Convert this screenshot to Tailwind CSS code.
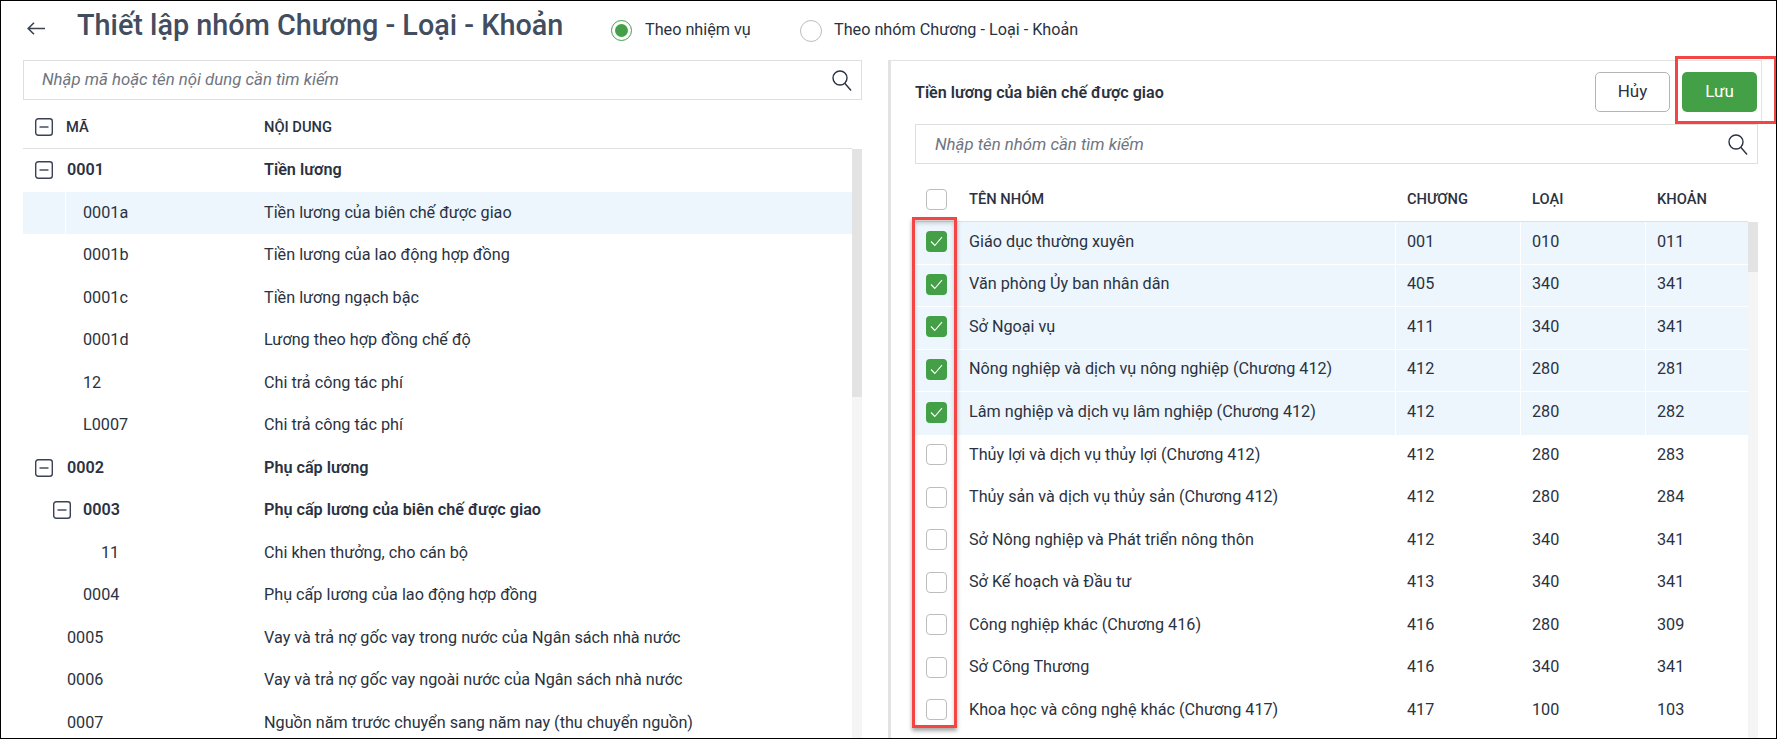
<!doctype html>
<html lang="vi">
<head>
<meta charset="utf-8">
<script src="https://cdn.jsdelivr.net/npm/@tailwindcss/browser@4"></script>
<title>Thiết lập nhóm Chương - Loại - Khoản</title>
</head>
<body class="bg-white">
<div class="relative w-[1777px] h-[739px] overflow-hidden border border-black bg-white font-[Roboto,sans-serif] text-[16.2px] text-[#2a3242]">

  <header class="flex items-start h-[59px]">
    <svg class="ml-[26px] mt-[21px] shrink-0" width="18" height="13" viewBox="0 0 18 13" fill="none" stroke="#3a4256" stroke-width="1.6"><path d="M18 6.5H1M7 .8 1.2 6.5 7 12.2"/></svg>
    <h1 class="ml-[32px] mt-[4px] w-[534px] shrink-0 text-[28.8px] leading-[40px] font-medium text-[#434d60] whitespace-nowrap">Thiết lập nhóm Chương - Loại - Khoản</h1>
    <div class="flex items-center mt-[19px] h-[21px]">
      <span class="flex items-center justify-center w-[21px] h-[21px] rounded-full border border-[#43a047]"><span class="w-[13px] h-[13px] rounded-full bg-[#43a047]"></span></span>
      <span class="ml-[13px] w-[155px]">Theo nhiệm vụ</span>
      <span class="w-[22px] h-[22px] rounded-full border border-[#bdbdbd]"></span>
      <span class="ml-[12px]">Theo nhóm Chương - Loại - Khoản</span>
    </div>
  </header>

  <main class="flex h-[678px]">
    <section class="ml-[22px] w-[839px] shrink-0 flex flex-col">
      <div class="flex items-center justify-between h-[40px] border border-[#dedede] pl-[18px] pr-[9px] italic text-[16.8px] text-[#6f7580]">
        <span>Nhập mã hoặc tên nội dung cần tìm kiếm</span>
        <svg width="20" height="21" viewBox="0 0 20 21" fill="none" stroke="#2a3242" stroke-width="1.4"><circle cx="8" cy="8" r="7"/><path d="M13 13.5l6 7"/></svg>
      </div>
      <div class="flex items-center h-[49px] w-[829px] pt-[6px] border-b border-[#e0e0e0] text-[14.7px] font-medium shrink-0">
        <div class="flex items-center w-[241px] pl-[12px]">
          <svg width="18" height="18" viewBox="0 0 18 18" fill="none" stroke="#3a4256" stroke-width="1.4"><rect x=".7" y=".7" width="16.6" height="16.6" rx="2.5"/><path d="M4.5 9h9"/></svg>
          <span class="ml-[13px]">MÃ</span>
        </div>
        <span>NỘI DUNG</span>
      </div>
      <div class="flex flex-1 min-h-0">
        <div class="w-[829px] shrink-0">
          <div class="flex items-center h-[42.5px] font-semibold"><div class="flex items-center w-[241px] pl-[12px]"><svg width="18" height="18" viewBox="0 0 18 18" fill="none" stroke="#3a4256" stroke-width="1.4"><rect x=".7" y=".7" width="16.6" height="16.6" rx="2.5"/><path d="M4.5 9h9"/></svg><span class="ml-[14px]">0001</span></div><span>Tiền lương</span></div>
          <div class="flex items-center h-[42.5px] bg-[#eef6fd]"><div class="w-[43px] h-full border-r border-white"></div><div class="w-[198px] pl-[17px]">0001a</div><span>Tiền lương của biên chế được giao</span></div>
          <div class="flex items-center h-[42.5px]"><div class="w-[241px] pl-[60px]">0001b</div><span>Tiền lương của lao động hợp đồng</span></div>
          <div class="flex items-center h-[42.5px]"><div class="w-[241px] pl-[60px]">0001c</div><span>Tiền lương ngạch bậc</span></div>
          <div class="flex items-center h-[42.5px]"><div class="w-[241px] pl-[60px]">0001d</div><span>Lương theo hợp đồng chế độ</span></div>
          <div class="flex items-center h-[42.5px]"><div class="w-[241px] pl-[60px]">12</div><span>Chi trả công tác phí</span></div>
          <div class="flex items-center h-[42.5px]"><div class="w-[241px] pl-[60px]">L0007</div><span>Chi trả công tác phí</span></div>
          <div class="flex items-center h-[42.5px] font-semibold"><div class="flex items-center w-[241px] pl-[12px]"><svg width="18" height="18" viewBox="0 0 18 18" fill="none" stroke="#3a4256" stroke-width="1.4"><rect x=".7" y=".7" width="16.6" height="16.6" rx="2.5"/><path d="M4.5 9h9"/></svg><span class="ml-[14px]">0002</span></div><span>Phụ cấp lương</span></div>
          <div class="flex items-center h-[42.5px] font-semibold"><div class="flex items-center w-[241px] pl-[30px]"><svg width="18" height="18" viewBox="0 0 18 18" fill="none" stroke="#3a4256" stroke-width="1.4"><rect x=".7" y=".7" width="16.6" height="16.6" rx="2.5"/><path d="M4.5 9h9"/></svg><span class="ml-[12px]">0003</span></div><span>Phụ cấp lương của biên chế được giao</span></div>
          <div class="flex items-center h-[42.5px]"><div class="w-[241px] pl-[78px]">11</div><span>Chi khen thưởng, cho cán bộ</span></div>
          <div class="flex items-center h-[42.5px]"><div class="w-[241px] pl-[60px]">0004</div><span>Phụ cấp lương của lao động hợp đồng</span></div>
          <div class="flex items-center h-[42.5px]"><div class="w-[241px] pl-[44px]">0005</div><span>Vay và trả nợ gốc vay trong nước của Ngân sách nhà nước</span></div>
          <div class="flex items-center h-[42.5px]"><div class="w-[241px] pl-[44px]">0006</div><span>Vay và trả nợ gốc vay ngoài nước của Ngân sách nhà nước</span></div>
          <div class="flex items-center h-[42.5px]"><div class="w-[241px] pl-[44px]">0007</div><span>Nguồn năm trước chuyển sang năm nay (thu chuyển nguồn)</span></div>
        </div>
        <div class="w-[10px] bg-[#f5f5f5] shrink-0"><div class="h-[248px] bg-[#e3e3e3]"></div></div>
      </div>
    </section>

    <section class="ml-[26px] w-[874px] shrink-0 border-l-[3px] border-t border-[#e3e3e3] pl-[24px] flex flex-col">
      <div class="flex items-center justify-between w-[847px] pr-[4px] h-[63px] shrink-0 border-r border-[#e3e3e3]">
        <span class="font-semibold text-[16.1px] mt-[1px]">Tiền lương của biên chế được giao</span>
        <div class="flex gap-[12px] mb-[2px] text-[17px]">
          <button class="w-[75px] h-[40px] rounded-[5px] border border-[#b5b5b5] bg-white text-[#2a3242]">Hủy</button>
          <button class="w-[75px] h-[40px] rounded-[5px] bg-[#43a047] text-white">Lưu</button>
        </div>
      </div>
      <div class="flex items-center justify-between w-[843px] h-[40px] shrink-0 border border-[#dedede] pl-[19px] pr-[9px] italic text-[16.8px] text-[#6f7580]">
        <span class="mt-[1px]">Nhập tên nhóm cần tìm kiếm</span>
        <svg width="20" height="21" viewBox="0 0 20 21" fill="none" stroke="#2a3242" stroke-width="1.4"><circle cx="8" cy="8" r="7"/><path d="M13 13.5l6 7"/></svg>
      </div>
      <div class="flex items-center h-[58px] w-[833px] pt-[13px] shrink-0 border-b border-[#e0e0e0] text-[14.7px] font-medium">
        <div class="w-[42px] pl-[11px]"><span class="block w-[21px] h-[21px] rounded-[4px] border border-[#bdbdbd]"></span></div>
        <div class="w-[439px] pl-[12px]">TÊN NHÓM</div>
        <div class="w-[125px] pl-[11px]">CHƯƠNG</div>
        <div class="w-[125px] pl-[11px]">LOẠI</div>
        <div class="pl-[11px]">KHOẢN</div>
      </div>
      <div class="flex flex-1 min-h-0 w-[843px]">
        <div class="w-[833px] shrink-0 [&>div>div]:pb-[2px]">
          <div class="flex items-center h-[42.5px] bg-[#eef6fd] border-b border-white divide-x divide-white">
            <div class="flex items-center h-full w-[42px] pl-[11px]"><span class="flex items-center justify-center w-[21px] h-[21px] rounded-[4px] bg-[#43a047]"><svg width="13" height="11" viewBox="0 0 13 11" fill="none" stroke="#fff" stroke-width="1.1"><path d="M1 5.5 4.8 9.5 12 1.2"/></svg></span></div>
            <div class="flex items-center h-full w-[439px] pl-[12px]">Giáo dục thường xuyên</div>
            <div class="flex items-center h-full w-[125px] pl-[11px]">001</div>
            <div class="flex items-center h-full w-[125px] pl-[11px]">010</div>
            <div class="flex items-center h-full pl-[11px]">011</div>
          </div>
          <div class="flex items-center h-[42.5px] bg-[#eef6fd] border-b border-white divide-x divide-white">
            <div class="flex items-center h-full w-[42px] pl-[11px]"><span class="flex items-center justify-center w-[21px] h-[21px] rounded-[4px] bg-[#43a047]"><svg width="13" height="11" viewBox="0 0 13 11" fill="none" stroke="#fff" stroke-width="1.1"><path d="M1 5.5 4.8 9.5 12 1.2"/></svg></span></div>
            <div class="flex items-center h-full w-[439px] pl-[12px]">Văn phòng Ủy ban nhân dân</div>
            <div class="flex items-center h-full w-[125px] pl-[11px]">405</div>
            <div class="flex items-center h-full w-[125px] pl-[11px]">340</div>
            <div class="flex items-center h-full pl-[11px]">341</div>
          </div>
          <div class="flex items-center h-[42.5px] bg-[#eef6fd] border-b border-white divide-x divide-white">
            <div class="flex items-center h-full w-[42px] pl-[11px]"><span class="flex items-center justify-center w-[21px] h-[21px] rounded-[4px] bg-[#43a047]"><svg width="13" height="11" viewBox="0 0 13 11" fill="none" stroke="#fff" stroke-width="1.1"><path d="M1 5.5 4.8 9.5 12 1.2"/></svg></span></div>
            <div class="flex items-center h-full w-[439px] pl-[12px]">Sở Ngoại vụ</div>
            <div class="flex items-center h-full w-[125px] pl-[11px]">411</div>
            <div class="flex items-center h-full w-[125px] pl-[11px]">340</div>
            <div class="flex items-center h-full pl-[11px]">341</div>
          </div>
          <div class="flex items-center h-[42.5px] bg-[#eef6fd] border-b border-white divide-x divide-white">
            <div class="flex items-center h-full w-[42px] pl-[11px]"><span class="flex items-center justify-center w-[21px] h-[21px] rounded-[4px] bg-[#43a047]"><svg width="13" height="11" viewBox="0 0 13 11" fill="none" stroke="#fff" stroke-width="1.1"><path d="M1 5.5 4.8 9.5 12 1.2"/></svg></span></div>
            <div class="flex items-center h-full w-[439px] pl-[12px]">Nông nghiệp và dịch vụ nông nghiệp (Chương 412)</div>
            <div class="flex items-center h-full w-[125px] pl-[11px]">412</div>
            <div class="flex items-center h-full w-[125px] pl-[11px]">280</div>
            <div class="flex items-center h-full pl-[11px]">281</div>
          </div>
          <div class="flex items-center h-[42.5px] bg-[#eef6fd] divide-x divide-white">
            <div class="flex items-center h-full w-[42px] pl-[11px]"><span class="flex items-center justify-center w-[21px] h-[21px] rounded-[4px] bg-[#43a047]"><svg width="13" height="11" viewBox="0 0 13 11" fill="none" stroke="#fff" stroke-width="1.1"><path d="M1 5.5 4.8 9.5 12 1.2"/></svg></span></div>
            <div class="flex items-center h-full w-[439px] pl-[12px]">Lâm nghiệp và dịch vụ lâm nghiệp (Chương 412)</div>
            <div class="flex items-center h-full w-[125px] pl-[11px]">412</div>
            <div class="flex items-center h-full w-[125px] pl-[11px]">280</div>
            <div class="flex items-center h-full pl-[11px]">282</div>
          </div>
          <div class="flex items-center h-[42.5px]"><div class="w-[42px] pl-[11px]"><span class="block w-[21px] h-[21px] rounded-[4px] border border-[#bdbdbd]"></span></div><div class="w-[439px] pl-[12px]">Thủy lợi và dịch vụ thủy lợi (Chương 412)</div><div class="w-[125px] pl-[11px]">412</div><div class="w-[125px] pl-[11px]">280</div><div class="pl-[11px]">283</div></div>
          <div class="flex items-center h-[42.5px]"><div class="w-[42px] pl-[11px]"><span class="block w-[21px] h-[21px] rounded-[4px] border border-[#bdbdbd]"></span></div><div class="w-[439px] pl-[12px]">Thủy sản và dịch vụ thủy sản (Chương 412)</div><div class="w-[125px] pl-[11px]">412</div><div class="w-[125px] pl-[11px]">280</div><div class="pl-[11px]">284</div></div>
          <div class="flex items-center h-[42.5px]"><div class="w-[42px] pl-[11px]"><span class="block w-[21px] h-[21px] rounded-[4px] border border-[#bdbdbd]"></span></div><div class="w-[439px] pl-[12px]">Sở Nông nghiệp và Phát triển nông thôn</div><div class="w-[125px] pl-[11px]">412</div><div class="w-[125px] pl-[11px]">340</div><div class="pl-[11px]">341</div></div>
          <div class="flex items-center h-[42.5px]"><div class="w-[42px] pl-[11px]"><span class="block w-[21px] h-[21px] rounded-[4px] border border-[#bdbdbd]"></span></div><div class="w-[439px] pl-[12px]">Sở Kế hoạch và Đầu tư</div><div class="w-[125px] pl-[11px]">413</div><div class="w-[125px] pl-[11px]">340</div><div class="pl-[11px]">341</div></div>
          <div class="flex items-center h-[42.5px]"><div class="w-[42px] pl-[11px]"><span class="block w-[21px] h-[21px] rounded-[4px] border border-[#bdbdbd]"></span></div><div class="w-[439px] pl-[12px]">Công nghiệp khác (Chương 416)</div><div class="w-[125px] pl-[11px]">416</div><div class="w-[125px] pl-[11px]">280</div><div class="pl-[11px]">309</div></div>
          <div class="flex items-center h-[42.5px]"><div class="w-[42px] pl-[11px]"><span class="block w-[21px] h-[21px] rounded-[4px] border border-[#bdbdbd]"></span></div><div class="w-[439px] pl-[12px]">Sở Công Thương</div><div class="w-[125px] pl-[11px]">416</div><div class="w-[125px] pl-[11px]">340</div><div class="pl-[11px]">341</div></div>
          <div class="flex items-center h-[42.5px]"><div class="w-[42px] pl-[11px]"><span class="block w-[21px] h-[21px] rounded-[4px] border border-[#bdbdbd]"></span></div><div class="w-[439px] pl-[12px]">Khoa học và công nghệ khác (Chương 417)</div><div class="w-[125px] pl-[11px]">417</div><div class="w-[125px] pl-[11px]">100</div><div class="pl-[11px]">103</div></div>
        </div>
        <div class="w-[10px] bg-[#f5f5f5] shrink-0"><div class="h-[50px] bg-[#e3e3e3]"></div></div>
      </div>
    </section>
  </main>

  <div class="absolute left-[1674px] top-[55px] w-[102px] h-[68px] border-[3px] border-[#f44545]"></div>
  <div class="absolute left-[911px] top-[216px] w-[45px] h-[511px] border-[3px] border-[#f44545] shadow-[0_3px_4px_rgba(0,0,0,0.35),inset_0_3px_4px_rgba(0,0,0,0.2)]"></div>
</div>
</body>
</html>
